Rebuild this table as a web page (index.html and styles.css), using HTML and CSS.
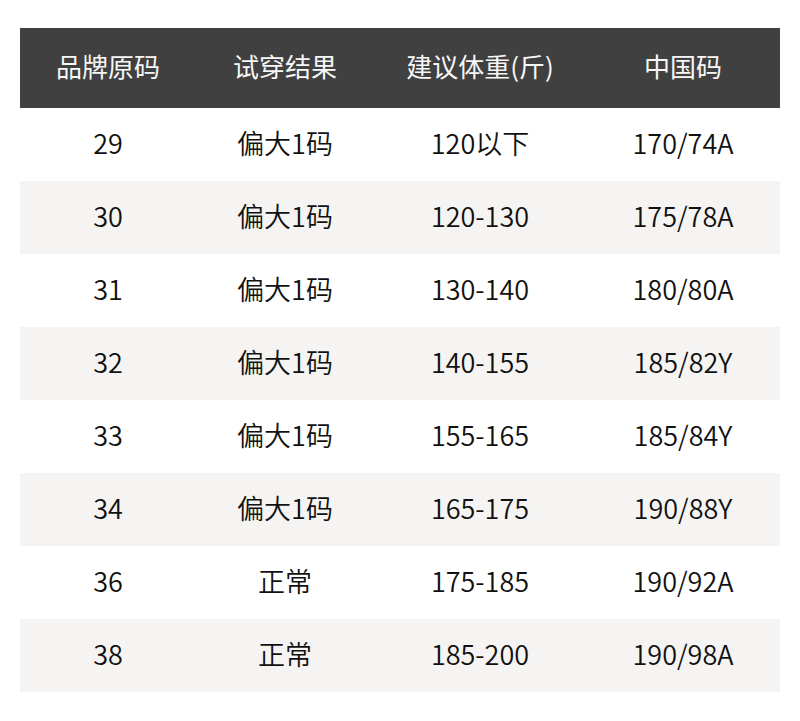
FILE: index.html
```html
<!DOCTYPE html>
<html lang="zh-CN">
<head>
<meta charset="utf-8">
<title>尺码表</title>
<link rel="stylesheet" href="styles.css">
</head>
<body>
<div class="page">
  <table class="size-table">
    <colgroup>
      <col class="c1"><col class="c2"><col class="c3"><col class="c4">
    </colgroup>
    <thead>
      <tr><th>品牌原码</th><th>试穿结果</th><th>建议体重(斤)</th><th>中国码</th></tr>
    </thead>
    <tbody>
      <tr><td>29</td><td>偏大1码</td><td>120以下</td><td>170/74A</td></tr>
      <tr><td>30</td><td>偏大1码</td><td>120-130</td><td>175/78A</td></tr>
      <tr><td>31</td><td>偏大1码</td><td>130-140</td><td>180/80A</td></tr>
      <tr><td>32</td><td>偏大1码</td><td>140-155</td><td>185/82Y</td></tr>
      <tr><td>33</td><td>偏大1码</td><td>155-165</td><td>185/84Y</td></tr>
      <tr><td>34</td><td>偏大1码</td><td>165-175</td><td>190/88Y</td></tr>
      <tr><td>36</td><td>正常</td><td>175-185</td><td>190/92A</td></tr>
      <tr><td>38</td><td>正常</td><td>185-200</td><td>190/98A</td></tr>
    </tbody>
  </table>
</div>
</body>
</html>
```
FILE: styles.css
```css
html, body {
  margin: 0;
  padding: 0;
  background: #ffffff;
}
.page {
  padding: 28px 20px 0 20px;
  font-family: "Noto Sans CJK SC", "Noto Sans", sans-serif;
}
.size-table {
  width: 760px;
  border-collapse: collapse;
  table-layout: fixed;
  font-size: 26px;
  line-height: 1.2;
}
.c1 { width: 176px; }
.c2 { width: 178px; }
.c3 { width: 212px; }
.c4 { width: 194px; }
.size-table th {
  height: 80px;
  box-sizing: border-box;
  padding: 0 0 5px 0;
  background: #404040;
  color: #f7f7f7;
  font-weight: 400;
  text-align: center;
  vertical-align: middle;
}
.size-table td {
  height: 73px;
  box-sizing: border-box;
  padding: 0 0 2px 0;
  color: #111111;
  font-size: 27px;
  font-weight: 350;
  text-align: center;
  vertical-align: middle;
}
.size-table tbody tr:nth-child(even) td {
  background: #f5f4f2;
}
```
